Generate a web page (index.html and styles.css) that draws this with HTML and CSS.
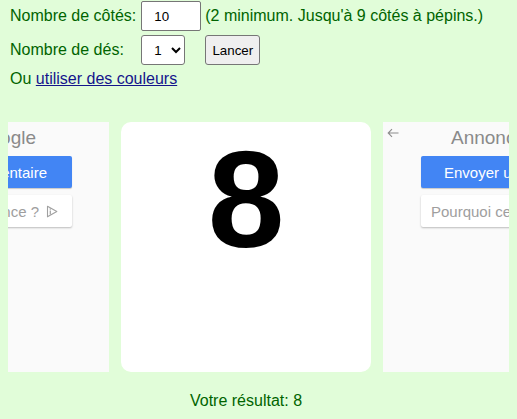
FILE: index.html
```html
<!DOCTYPE html>
<html lang="fr">
<head>
<meta charset="utf-8">
<title>Lancer de dés</title>
<link rel="stylesheet" href="styles.css">
</head>
<body>
<table class="form">
  <tr>
    <td class="label">Nombre de côtés:</td>
    <td><input class="sides" type="text" value="10"></td>
    <td>(2 minimum. Jusqu'à 9 côtés à pépins.)</td>
  </tr>
  <tr>
    <td class="label">Nombre de dés:</td>
    <td><select class="dice"><option>1</option><option>2</option><option>3</option></select></td>
    <td><button class="roll" type="button">Lancer</button></td>
  </tr>
</table>
<div class="colors">Ou <a href="#">utiliser des couleurs</a></div>
<div class="wrap">
  <div class="carousel">
    <div class="ad ad-left">
      <div class="ad-head"><span>Annonces Google</span></div>
      <div class="ad-btn primary"><span>Envoyer un commentaire</span></div>
      <div class="ad-btn secondary"><span>Pourquoi cette annonce ?</span>
        <svg class="adchoices" width="12" height="13" viewBox="0 0 12 13"><path d="M1.5 1.2 L10.8 6.5 L1.5 11.8 Z" fill="none" stroke="#a0a0a0" stroke-width="1.1" stroke-linejoin="round"/><path d="M4.3 5.6 V9.6" stroke="#a0a0a0" stroke-width="1.2"/><circle cx="4.3" cy="4" r="0.8" fill="#a0a0a0"/></svg>
      </div>
    </div>
    <div class="die"><span>8</span></div>
    <div class="ad ad-right">
      <svg class="back" width="12" height="10" viewBox="0 0 12 10"><path d="M11.5 5 H1.2 M5 1.2 L1.2 5 L5 8.8" fill="none" stroke="#8c8c8c" stroke-width="1.1"/></svg>
      <div class="ad-head"><span>Annonce fermée par Google</span></div>
      <div class="ad-btn primary"><span>Envoyer un commentaire</span></div>
      <div class="ad-btn secondary"><span>Pourquoi cette annonce ?</span></div>
    </div>
  </div>
  <div class="result">Votre résultat: 8</div>
</div>
</body>
</html>
```
FILE: styles.css
```css
html {
  overflow: hidden;
}
body {
  margin: 0 8px;
  background: #e1fdd9;
  color: #006400;
  font-family: "Liberation Sans", Arial, sans-serif;
  font-size: 16px;
}
.form {
  border-spacing: 2px;
  margin-top: -2px;
}
.form td {
  padding: 1px;
  white-space: nowrap;
}
.form td.label {
  padding: 1px 2px 1px 0;
}
.sides {
  box-sizing: border-box;
  width: 60px;
  height: 30px;
  margin: 0;
  padding: 0 0 0 12px;
  font: 13.33px "Liberation Sans", Arial, sans-serif;
  color: #000;
  background: #fff;
  border: 1px solid #767676;
  border-radius: 2px;
  display: block;
}
.dice {
  box-sizing: border-box;
  width: 44px;
  height: 30px;
  margin: 0;
  padding-left: 8px;
  font: 13.33px "Liberation Sans", Arial, sans-serif;
  color: #000;
  background-color: #fff;
  border: 1px solid #767676;
  border-radius: 3px;
  display: block;
}
.roll {
  box-sizing: border-box;
  width: 55px;
  height: 30px;
  margin: 0;
  padding: 0;
  font: 13.33px "Liberation Sans", Arial, sans-serif;
  color: #000;
  background: #efefef;
  border: 1px solid #767676;
  border-radius: 3px;
  display: block;
}
.colors {
  margin-top: 2px;
  padding-left: 2px;
}
.colors a {
  color: #14148c;
}
.wrap {
  width: 476px;
}
.carousel {
  display: flex;
  justify-content: center;
  gap: 12px;
  margin-top: 34px;
}
.die {
  flex-shrink: 0;
  box-sizing: border-box;
  width: 250px;
  height: 250px;
  padding-top: 8px;
  background: #fff;
  border-radius: 10px;
  text-align: center;
  color: #000;
  font: bold 138px/1 "Liberation Sans", Arial, sans-serif;
}
.ad {
  flex-shrink: 0;
  box-sizing: border-box;
  width: 250px;
  height: 250px;
  padding-top: 5px;
  background: #fafafa;
  position: relative;
  overflow: hidden;
}
.ad-head {
  display: flex;
  font-size: 19px;
  line-height: 22px;
  color: #8a8a8a;
  white-space: nowrap;
}
.ad-left .ad-head {
  justify-content: flex-end;
  padding-right: 73px;
}
.ad-right .ad-head {
  padding-left: 68px;
}
.ad-btn {
  box-sizing: border-box;
  width: 175px;
  height: 32px;
  margin: 7px 0 0 38px;
  display: flex;
  align-items: center;
  gap: 7px;
  font-size: 15px;
  white-space: nowrap;
  overflow: hidden;
  border-radius: 2px;
}
.ad-btn span {
  flex-shrink: 0;
}
.primary {
  background: #4285f4;
  color: #fff;
  box-shadow: 0 1px 1px rgba(0, 0, 0, 0.2);
}
.secondary {
  background: #fff;
  color: #9e9e9e;
  box-shadow: 0 1px 2px rgba(0, 0, 0, 0.25);
}
.ad-left .ad-btn {
  justify-content: flex-end;
}
.ad-left .primary {
  padding-right: 25px;
}
.ad-left .secondary {
  padding-right: 14px;
}
.ad-right .primary {
  padding-left: 23px;
}
.ad-right .secondary {
  padding-left: 10px;
}
.adchoices {
  flex-shrink: 0;
}
.back {
  position: absolute;
  left: 4px;
  top: 6px;
}
.result {
  margin-top: 20px;
  text-align: center;
}
```
